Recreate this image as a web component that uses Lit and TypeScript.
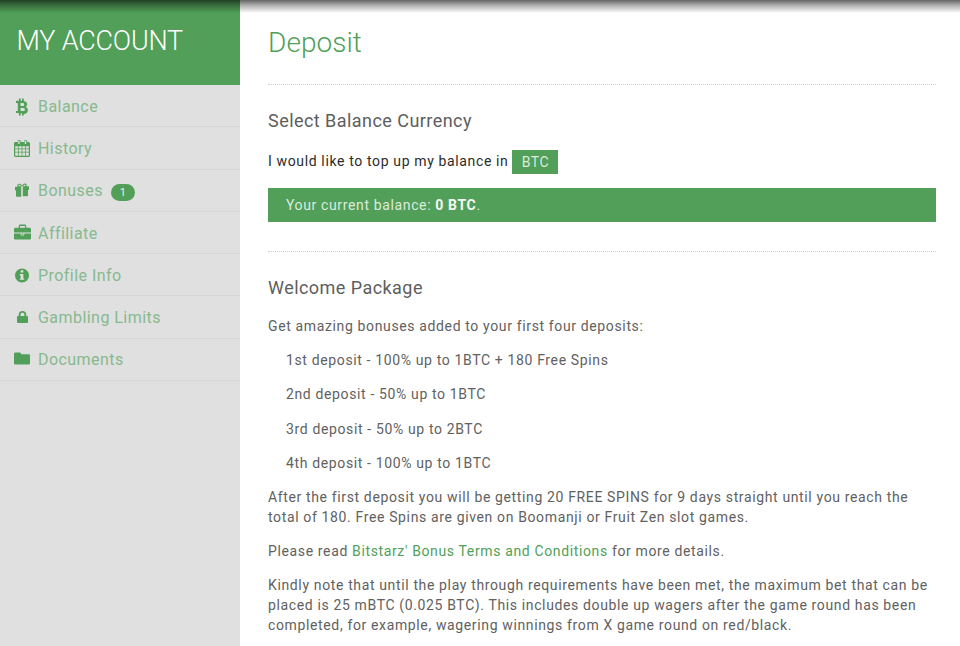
import { LitElement, html, css, svg } from "lit";
import { customElement } from "lit/decorators.js";

const icons: Record<string, unknown> = {
  btc: svg`<g transform="translate(.27 .5) scale(.91 1)"><path d="M6.200 1h1.900v2.200h1.500V1h1.900v2.400c2.200.3 3.700 1.400 3.700 3.400 0 1.300-.7 2.200-1.800 2.700 1.600.4 2.600 1.500 2.600 3.200 0 2.400-1.800 3.600-4.500 3.800V18h-1.900v-2.300H8.100V18H6.200v-2.400H3v-2.200h1.300c.5 0 .7-.3.7-.7V6.200c0-.4-.2-.7-.7-.7H3V3.300h3.200V1zM8 5.400v3.200h2.200c1.100 0 1.900-.5 1.900-1.600s-.8-1.600-1.900-1.600H8zm0 5.200v3h2.800c1.200 0 2-.5 2-1.500s-.8-1.500-2-1.500H8z"/></g>`,
  calendar: svg`<g transform="translate(.06 0) scale(.94 1)"><path fill-rule="evenodd" d="M4 3h1V1.200h3V3h4V1.200h3V3h1.500C17.300 3 18 3.700 18 4.500v12c0 .8-.7 1.500-1.500 1.500h-14C1.700 18 1 17.300 1 16.500v-12C1 3.700 1.700 3 2.500 3H4zM5.500 2v3h1.500V2H5.500zm7 0v3H14V2h-1.500zM2.300 7.200v2.300h2.900V7.200H2.300zm3.700 0v2.300h3.100V7.200H6zm3.900 0v2.300H13V7.200H9.900zm3.900 0v2.300h2.900V7.200h-2.900zM2.300 10.300v2.400h2.900v-2.400H2.300zm3.700 0v2.400h3.100v-2.400H6zm3.900 0v2.400H13v-2.400H9.900zm3.900 0v2.400h2.900v-2.400h-2.900zM2.300 13.500v3.200h2.900v-3.200H2.300zm3.700 0v3.200h3.100v-3.200H6zm3.900 0v3.200H13v-3.200H9.900zm3.900 0v3.200h2.900v-3.200h-2.900z"/></g>`,
  gift: svg`<path fill-rule="evenodd" d="M6 2.500c1.300 0 2.300 1 3 2.200.7-1.200 1.700-2.200 3-2.200 1 0 1.700.6 1.700 1.500 0 .5-.2 1-.5 1.300h2.300c.3 0 .5.200.5.500v2.700c0 .2-.2.400-.5.400h-.5v5.600c0 .4-.3.700-.7.700H9.800V5.300H8.200v10.500H3.700c-.4 0-.7-.3-.7-.7V9.500h-.5c-.3 0-.5-.2-.5-.4V6.300c0-.3.200-.5.500-.5h2.300c-.3-.3-.5-.8-.5-1.300 0-.9.700-1.500 1.700-1.500zm0 1.200c-.3 0-.5.200-.5.500 0 .6.500 1.100 1.100 1.100h1.500c-.5-.9-1.200-1.600-2.100-1.600zm6 0c-.9 0-1.600.7-2.100 1.600h1.500c.6 0 1.100-.5 1.100-1.100 0-.3-.2-.5-.5-.5z"/>`,
  briefcase: svg`<g transform="translate(1 -.9) scale(.895 .94)"><path fill-rule="evenodd" d="M7 1.500h5c1 0 1.700.7 1.700 1.700V5h3.800c.8 0 1.500.7 1.500 1.500V10H0V6.500C0 5.700.7 5 1.500 5h3.800V3.200c0-1 .7-1.700 1.700-1.700zm0 1.500c-.2 0-.3.100-.3.300V5h5.600V3.300c0-.2-.1-.3-.3-.3H7zM0 11h7.500v1.500c0 .4.300.7.700.7h2.600c.4 0 .7-.3.700-.7V11H19v5c0 .8-.7 1.500-1.500 1.500h-16C.7 17.500 0 16.800 0 16v-5zm8.500 0h2v1.300h-2V11z"/></g>`,
  info: svg`<g transform="translate(.69 1.01) scale(.875)"><path fill-rule="evenodd" d="M9.500 1.700a8 8 0 1 1 0 16 8 8 0 0 1 0-16zM8 3.700v2.600h3V3.700H8zM7 8v1.600h1v3.400H7v1.700h5V13h-1V8H7z"/></g>`,
  lock: svg`<g transform="translate(1.46 1.45) scale(.846 .774)"><path fill-rule="evenodd" d="M9.500 2c2.700 0 4.500 1.900 4.500 4.500V8.500h.7c.7 0 1.300.6 1.300 1.300v6.400c0 .7-.6 1.300-1.300 1.300H4.300c-.7 0-1.300-.6-1.300-1.300V9.800c0-.7.600-1.300 1.300-1.300H5V6.500C5 3.900 6.800 2 9.500 2zm0 2.200c-1.400 0-2.200 1-2.200 2.300v2h4.400v-2c0-1.300-.8-2.300-2.200-2.300z"/></g>`,
  folder: svg`<g transform="translate(.56 .02) scale(.889 .828)"><path d="M2 3h4.500c1 0 1.500.5 1.800 1.200l.4.800h8.300c.9 0 1.500.6 1.500 1.500v9.500c0 .9-.6 1.500-1.500 1.500H2c-.9 0-1.500-.6-1.500-1.500v-11C.5 3.600 1.100 3 2 3z"/></g>`,
};

const nav = [
  ["btc", "Balance"],
  ["calendar", "History"],
  ["gift", "Bonuses"],
  ["briefcase", "Affiliate"],
  ["info", "Profile Info"],
  ["lock", "Gambling Limits"],
  ["folder", "Documents"],
];

const tiers = [
  "1st deposit - 100% up to 1BTC + 180 Free Spins",
  "2nd deposit - 50% up to 1BTC",
  "3rd deposit - 50% up to 2BTC",
  "4th deposit - 100% up to 1BTC",
];

@customElement("app-root")
export class AppRoot extends LitElement {
  static styles = css`
    :host {
      display: block;
      position: relative;
      width: 960px;
      height: 646px;
      overflow: hidden;
      background: #fff;
      font-family: Roboto, "Liberation Sans", sans-serif;
      font-size: 14px;
      letter-spacing: 0.635px;
      color: #616161;
    }
    .layout {
      display: flex;
      height: 100%;
    }
    .sidebar {
      width: 240px;
      flex: none;
      background: #e0e0e0;
    }
    .brand {
      height: 85px;
      box-sizing: border-box;
      padding: 23px 0 0 16.5px;
      background: #519f58;
      color: #fff;
      font-size: 27px;
      font-weight: 300;
      line-height: 36px;
      letter-spacing: -0.2px;
    }
    .item {
      height: 42.3px;
      box-sizing: border-box;
      display: flex;
      align-items: center;
      padding: 1px 0 0 13px;
      border-bottom: 1px solid #d7d7d7;
      color: #87b98e;
      font-size: 16px;
      font-weight: 400;
      letter-spacing: 0.45px;
    }
    .item svg {
      width: 19px;
      height: 19px;
      flex: none;
      margin-right: 6px;
      fill: #519f58;
    }
    .badge {
      margin: 3px 0 0 8px;
      width: 24px;
      height: 17px;
      border-radius: 9px;
      background: #519f58;
      color: #e6f0e7;
      font-size: 11px;
      line-height: 17px;
      text-align: center;
      letter-spacing: 0;
    }
    .main {
      flex: 1;
      min-width: 0;
      padding: 0 24px 0 28px;
    }
    h1 {
      margin: 0;
      padding-top: 24px;
      height: 38px;
      font-size: 28px;
      font-weight: 300;
      line-height: 38px;
      letter-spacing: 0.05px;
      color: #519f58;
    }
    .rule {
      margin-top: 22px;
      border-top: 1px dotted #cfcfcf;
    }
    h2 {
      margin: 0;
      font-size: 18px;
      font-weight: 400;
      line-height: 24px;
      letter-spacing: 0.45px;
      color: #5e5e5e;
    }
    .select-title {
      margin-top: 24px;
    }
    .select {
      margin-top: 17px;
      display: flex;
      align-items: flex-start;
      height: 24px;
      line-height: 22px;
      color: #2c2c2c;
    }
    .tag {
      margin-left: 4px;
      width: 46px;
      height: 24px;
      background: #519f58;
      color: #dcebdd;
      line-height: 24px;
      text-align: center;
    }
    .balance {
      margin-top: 14px;
      height: 34px;
      padding-left: 18px;
      background: #519f58;
      color: #dcebdd;
      line-height: 34px;
    }
    .balance b {
      color: #f4f8f4;
      font-weight: 700;
    }
    .rule.second {
      margin-top: 29px;
    }
    .welcome-title {
      margin-top: 24px;
    }
    p {
      margin: 0;
      line-height: 20px;
    }
    .stack {
      margin-top: 16px;
      display: flex;
      flex-direction: column;
      gap: 14.2px;
    }
    .tier {
      padding-left: 18px;
    }
    a {
      color: #519f58;
      text-decoration: none;
    }
    .shade {
      position: absolute;
      left: 0;
      top: 0;
      right: 0;
      height: 13px;
      background: linear-gradient(
        to bottom,
        rgba(0, 0, 0, 0.6),
        rgba(0, 0, 0, 0.32) 40%,
        rgba(0, 0, 0, 0)
      );
    }
  `;

  render() {
    return html`
      <div class="layout">
        <aside class="sidebar">
          <div class="brand">MY ACCOUNT</div>
          ${nav.map(
            ([icon, label]) => html`
              <div class="item">
                <svg viewBox="0 0 19 19">${icons[icon]}</svg>
                <span>${label}</span>
                ${label === "Bonuses" ? html`<span class="badge">1</span>` : ""}
              </div>
            `
          )}
        </aside>
        <main class="main">
          <h1>Deposit</h1>
          <div class="rule"></div>
          <h2 class="select-title">Select Balance Currency</h2>
          <div class="select">
            I would like to top up my balance in
            <span class="tag">BTC</span>
          </div>
          <div class="balance">Your current balance: <b>0 BTC</b>.</div>
          <div class="rule second"></div>
          <h2 class="welcome-title">Welcome Package</h2>
          <div class="stack">
            <p>Get amazing bonuses added to your first four deposits:</p>
            ${tiers.map((t) => html`<p class="tier">${t}</p>`)}
            <p>
              After the first deposit you will be getting 20 FREE SPINS for 9 days straight until you reach the
              total of 180. Free Spins are given on Boomanji or Fruit Zen slot games.
            </p>
            <p>Please read <a href="#">Bitstarz' Bonus Terms and Conditions</a> for more details.</p>
            <p>
              Kindly note that until the play through requirements have been met, the maximum bet that can be
              placed is 25 mBTC (0.025 BTC). This includes double up wagers after the game round has been
              completed, for example, wagering winnings from X game round on red/black.
            </p>
          </div>
        </main>
      </div>
      <div class="shade"></div>
    `;
  }
}
